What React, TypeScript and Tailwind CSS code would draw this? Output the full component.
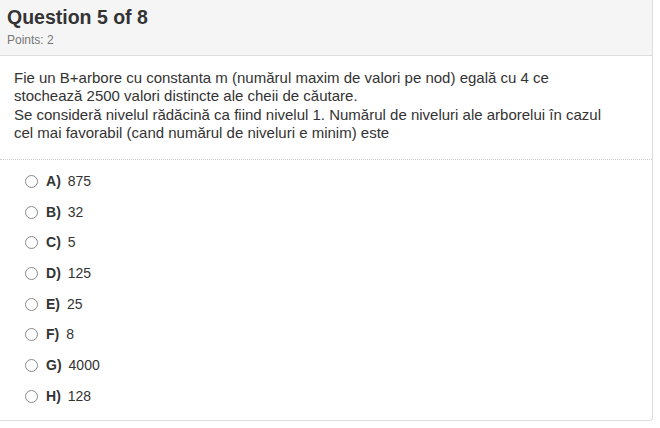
const OPTIONS: { key: string; text: string }[] = [
  { key: "A", text: "875" },
  { key: "B", text: "32" },
  { key: "C", text: "5" },
  { key: "D", text: "125" },
  { key: "E", text: "25" },
  { key: "F", text: "8" },
  { key: "G", text: "4000" },
  { key: "H", text: "128" },
];

export default function App() {
  return (
    <div className="w-[660px] h-[428px] bg-white font-['Liberation_Sans',Arial,sans-serif] text-[#333]">
      <div className="w-[653px] border-r border-b border-[#ddd] rounded-br-[4px] bg-white">
        <div className="h-[56px] bg-[#f5f5f5] border-b border-[#ddd] px-[7px] pt-[4px]">
          <h2 className="text-[19.5px] font-bold leading-[26px] text-[#333]">Question 5 of 8</h2>
          <div className="mt-[3px] text-[12px] leading-[15px] text-[#777]">Points: 2</div>
        </div>

        <div className="pl-[14px] pr-[45px] pt-[13px] pb-[17px] border-b border-dotted border-[#ccc] text-[15px] leading-[18.3px]">
          <p>
            Fie un B+arbore cu constanta m (numărul maxim de valori pe nod) egală cu 4 ce
            stochează 2500 valori distincte ale cheii de căutare.
          </p>
          <p>
            Se consideră nivelul rădăcină ca fiind nivelul 1. Numărul de niveluri ale arborelui în cazul
            cel mai favorabil (cand numărul de niveluri e minim) este
          </p>
        </div>

        <ul className="pt-[6px] pb-[8px]">
          {OPTIONS.map((opt) => (
            <li key={opt.key} className="h-[30.7px] flex items-center pl-[25px] text-[14px]">
              <span className="w-[13px] h-[13px] rounded-full border border-[#8a8a8a] bg-white shrink-0" />
              <span className="ml-[8px] font-bold">{opt.key})</span>
              <span className="ml-[7px]">{opt.text}</span>
            </li>
          ))}
        </ul>
      </div>
    </div>
  );
}
